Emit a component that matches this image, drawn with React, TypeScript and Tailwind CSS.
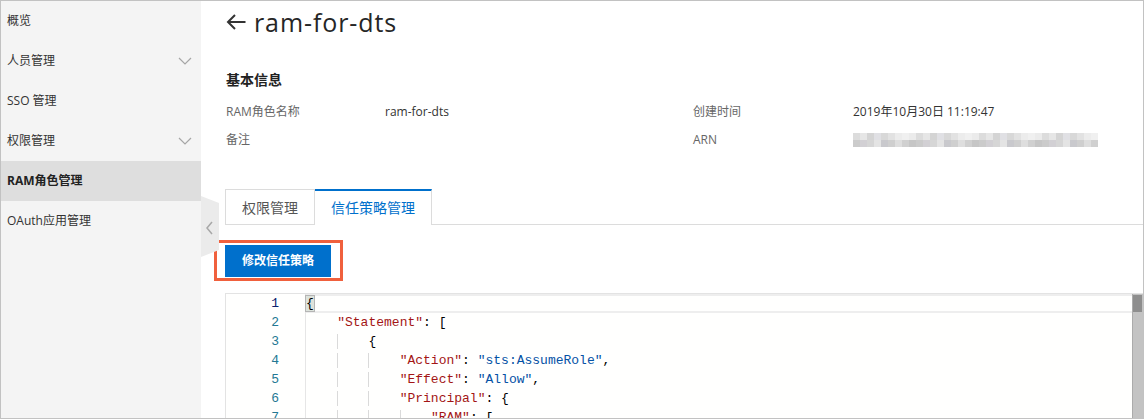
import React from 'react';

const sans = { fontFamily: '"Open Sans", "Noto Sans CJK SC", sans-serif' };
const mono = { fontFamily: '"Liberation Mono", "DejaVu Sans Mono", monospace' };

const menu = [
  { label: '概览' },
  { label: '人员管理', arrow: true },
  { label: 'SSO 管理' },
  { label: '权限管理', arrow: true },
  { label: 'RAM角色管理', active: true },
  { label: 'OAuth应用管理' },
];

type Tok = { t: string; c?: string };

const K = '#a31515';
const S = '#0451a5';

const code: { indent: number; toks: Tok[] }[] = [
  { indent: 0, toks: [{ t: '{' }] },
  { indent: 1, toks: [{ t: '"Statement"', c: K }, { t: ': [' }] },
  { indent: 2, toks: [{ t: '{' }] },
  { indent: 3, toks: [{ t: '"Action"', c: K }, { t: ': ' }, { t: '"sts:AssumeRole"', c: S }, { t: ',' }] },
  { indent: 3, toks: [{ t: '"Effect"', c: K }, { t: ': ' }, { t: '"Allow"', c: S }, { t: ',' }] },
  { indent: 3, toks: [{ t: '"Principal"', c: K }, { t: ': {' }] },
  { indent: 4, toks: [{ t: '"RAM"', c: K }, { t: ': [' }] },
];

// pixelated ARN
const mosaic = (() => {
  const light = ['#ececec', '#e6e6e6', '#e2e2e2', '#dcdcdc', '#d8d8d8', '#ebebeb', '#e0e0e4', '#f0f0f0', '#d4d4d4'];
  const dark = ['#d0d0d0', '#cbcbcb', '#d6d6d6', '#c9c9cd', '#dedede', '#c6c6c6', '#d2d0d4', '#e4e4e4', '#cfcfcf'];
  const cells: { x: number; y: number; c: string }[] = [];
  for (let i = 0; i < 35; i++) {
    cells.push({ x: i * 7, y: 0, c: light[(i * 7 + 3) % light.length] });
    cells.push({ x: i * 7, y: 7, c: dark[(i * 5 + 1) % dark.length] });
  }
  return cells;
})();

function ChevronDown() {
  return (
    <svg width="14" height="8" viewBox="0 0 14 8" fill="none">
      <path d="M1 1l6 6 6-6" stroke="#a6a6a6" strokeWidth="1.2" />
    </svg>
  );
}

function Sidebar() {
  return (
    <div className="w-[200px] shrink-0 bg-[#f4f4f4] text-[12px] text-[#333]" style={sans}>
      {menu.map((m) => (
        <div
          key={m.label}
          className={
            'flex h-10 items-center justify-between pl-[6px] pr-[9px] ' +
            (m.active ? 'bg-[#dedede] font-bold text-[#222]' : '')
          }
        >
          <span>{m.label}</span>
          {m.arrow && <ChevronDown />}
        </div>
      ))}
    </div>
  );
}

function Editor() {
  return (
    <div className="flex flex-1 border-l border-t border-[#e3e3e3] bg-[#fffffe]" style={mono}>
      <div className="w-[80px] shrink-0 border-r border-[#e6e6e6] pr-[26px] text-right text-[13px] leading-[19px] text-[#237893]">
        {code.map((_, i) => (
          <div key={i} className={'h-[19px] ' + (i === 0 ? 'text-[#0b216f]' : '')}>
            {i + 1}
          </div>
        ))}
      </div>
      <div className="flex-1 text-[13px] leading-[19px] text-black">
        {code.map((ln, i) => (
          <div
            key={i}
            className={
              'h-[19px] whitespace-pre ' +
              (i === 0 ? 'border-y-2 border-[#eeeeee] leading-[15px]' : '')
            }
          >
            {i === 0 ? (
              <span className="bg-[#dde3dc] outline outline-1 outline-[#b5b5b5]">{'{'}</span>
            ) : (
              <>
                {Array.from({ length: ln.indent }).map((__, k) => (
                  <span key={k} className={k === 0 ? '' : 'shadow-[inset_1px_0_0_#dadada]'}>
                    {'    '}
                  </span>
                ))}
                {ln.toks.map((t, k) => (
                  <span key={k} style={t.c ? { color: t.c } : undefined}>
                    {t.t}
                  </span>
                ))}
              </>
            )}
          </div>
        ))}
      </div>
      <div className="w-[11px] shrink-0 border-l border-[#ababab] bg-[#c3c3c3] pt-[1px]">
        <div className="h-[17px] w-[9px] bg-[#8e8e8e]" />
      </div>
    </div>
  );
}

export default function App() {
  return (
    <div className="flex h-[419px] w-[1144px] overflow-hidden border border-[#c2c2c2] bg-white">
      <Sidebar />
      <div className="relative flex flex-1 flex-col overflow-hidden pl-[24px]" style={sans}>
        {/* collapse handle */}
        <div className="absolute left-0 top-[195px]">
          <svg width="18" height="61" viewBox="0 0 18 61">
            <polygon points="0,0 18,7 18,54 0,61" fill="#ebebeb" />
            <path d="M11 26l-5 6 5 6" fill="none" stroke="#a8a8a8" strokeWidth="1.5" />
          </svg>
        </div>

        <div className="flex h-[42px] shrink-0 items-center gap-[8px] pl-[1px] text-[#262626]">
          <svg width="20" height="16" viewBox="0 0 20 16" fill="none">
            <path d="M19.5 8H2M9 1L2 8l7 7" stroke="#333" strokeWidth="2" />
          </svg>
          <span className="text-[25px] leading-none tracking-[0.9px]">ram-for-dts</span>
        </div>

        <div className="mt-[26px] flex h-[20px] shrink-0 items-center pl-[1px] text-[14px] font-bold text-[#222]">
          基本信息
        </div>

        <div className="mt-[9px] grid shrink-0 grid-cols-[159px_308px_160px_1fr] pl-[1px] text-[12px]">
          <div className="flex h-[28px] items-center text-[#666]">RAM角色名称</div>
          <div className="flex h-[28px] items-center text-[#333]">ram-for-dts</div>
          <div className="flex h-[28px] items-center text-[#666]">创建时间</div>
          <div className="flex h-[28px] items-center text-[#333]">2019年10月30日 11:19:47</div>
          <div className="flex h-[28px] items-center text-[#666]">备注</div>
          <div className="h-[28px]" />
          <div className="flex h-[28px] items-center text-[#666]">ARN</div>
          <div className="flex h-[28px] items-center">
            <svg width="245" height="14" viewBox="0 0 245 14">
              {mosaic.map((m, i) => (
                <rect key={i} x={m.x} y={m.y} width="7" height="7" fill={m.c} />
              ))}
            </svg>
          </div>
        </div>

        <div className="mt-[35px] flex h-[36px] shrink-0 text-[14px]">
          <div className="flex items-center border border-[#dcdcdc] px-[16px] text-[#555]">权限管理</div>
          <div className="flex items-center border-t-2 border-r border-t-[#0070cc] border-r-[#dcdcdc] px-[16px] pb-[1px] text-[#0070cc]">
            信任策略管理
          </div>
          <div className="flex-1 border-b border-[#dcdcdc]" />
        </div>

        <div className="ml-[-11px] mt-[15px] w-fit shrink-0 border-[3px] border-[#f0603d] pb-[1px] pl-[8px] pr-[9px] pt-[2px]">
          <div className="flex h-[32px] w-[106px] items-center justify-center bg-[#0070cc] text-[12px] font-bold text-white">
            修改信任策略
          </div>
        </div>

        <div className="mt-[12px] flex h-[140px] shrink-0">
          <Editor />
        </div>
      </div>
    </div>
  );
}
